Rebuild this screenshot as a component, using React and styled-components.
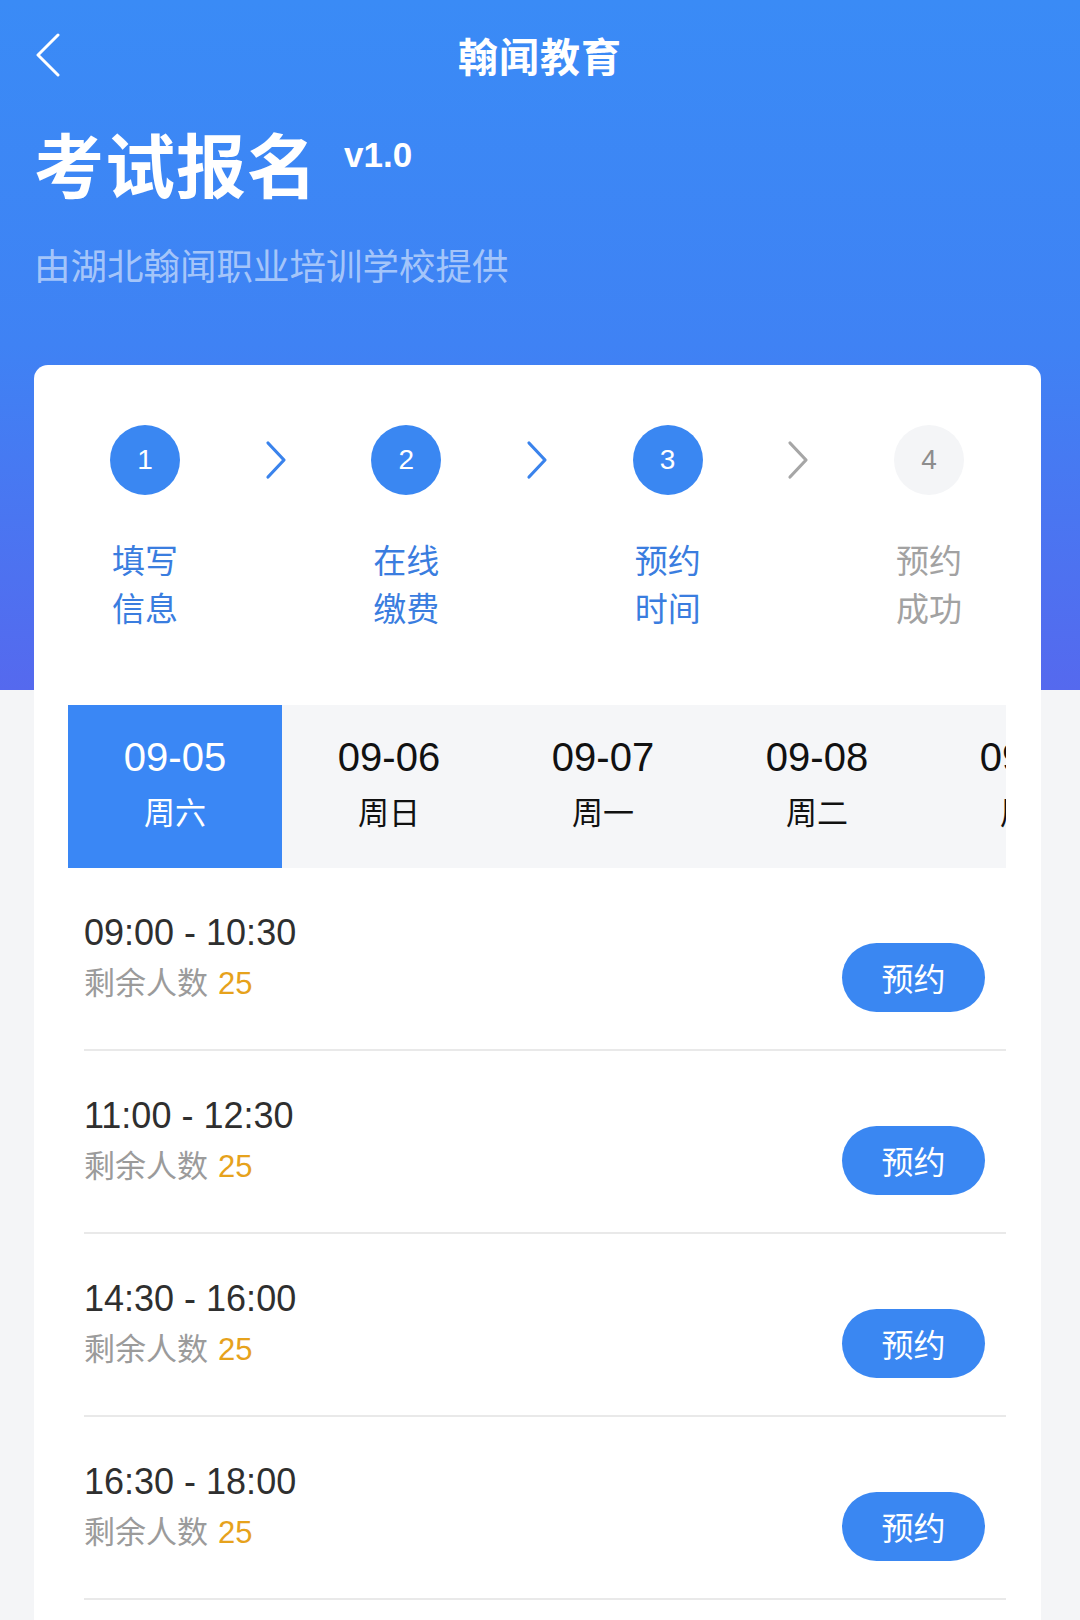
import { Fragment } from "react"
import styled, { createGlobalStyle } from "styled-components"

const GlobalStyle = createGlobalStyle`
  body {
    margin: 0;
    background: #f4f5f7;
    font-family: "Liberation Sans", "Noto Sans CJK SC", sans-serif;
  }
`

const Page = styled.div`
  width: 1080px;
  min-height: 1620px;
  background: #f4f5f7;
  overflow: hidden;
`

const Header = styled.div`
  height: 690px;
  background: linear-gradient(180deg, #3a8bf6 0%, #3f82f4 50%, #5569ee 100%);
  color: #fff;
`

const NavBar = styled.div`
  position: relative;
  height: 110px;
  display: flex;
  align-items: center;
  justify-content: center;
`

const BackButton = styled.div`
  position: absolute;
  left: 34px;
  top: 33px;
  width: 28px;
  height: 44px;
`

const NavTitle = styled.h1`
  margin: 0;
  font-size: 40px;
  font-weight: 700;
  letter-spacing: 1px;
`

const TitleRow = styled.div`
  margin: 24px 0 0 34px;
  display: flex;
  align-items: flex-start;
`

const Title = styled.h2`
  margin: 0;
  font-size: 70px;
  line-height: 70px;
  font-weight: 700;
  letter-spacing: 1px;
`

const Version = styled.span`
  margin: 3px 0 0 26px;
  font-size: 35px;
  line-height: 35px;
  font-weight: 700;
`

const Subtitle = styled.p`
  margin: 42px 0 0 34px;
  font-size: 36.5px;
  line-height: 43px;
  color: rgba(255, 255, 255, 0.55);
`

const Card = styled.div`
  margin: -325px 39px 0 34px;
  background: #fff;
  border-radius: 14px;
  padding: 60px 0 40px;
`

const Steps = styled.div`
  display: flex;
  justify-content: space-between;
  align-items: flex-start;
  padding: 0 62px 0 61px;
`

const Step = styled.div`
  width: 100px;
  display: flex;
  flex-direction: column;
  align-items: center;
`

const Circle = styled.div`
  width: 70px;
  height: 70px;
  border-radius: 50%;
  background: ${(p) => (p.$done ? "#3a87f2" : "#f4f5f7")};
  color: ${(p) => (p.$done ? "#fff" : "#8d8d8d")};
  font-size: 28px;
  display: flex;
  align-items: center;
  justify-content: center;
`

const StepLabel = styled.div`
  margin-top: 43px;
  font-size: 33px;
  line-height: 48px;
  text-align: center;
  color: ${(p) => (p.$done ? "#3a7ddf" : "#a2a2a2")};
`

const Chevron = styled.div`
  width: 24px;
  height: 40px;
  margin-top: 15px;
  color: ${(p) => (p.$done ? "#3a83ec" : "#a6a6a6")};
`

const DateStrip = styled.div`
  margin: 71px 35px 0 34px;
  display: flex;
  overflow: hidden;
  background: #f5f6f8;
`

const DateTab = styled.div`
  flex: 0 0 214px;
  height: 163px;
  padding-bottom: 6px;
  box-sizing: border-box;
  display: flex;
  flex-direction: column;
  align-items: center;
  justify-content: center;
  gap: 14px;
  background: ${(p) => (p.$active ? "#3a87f5" : "transparent")};
  color: ${(p) => (p.$active ? "#fff" : "#111")};
`

const DateText = styled.div`
  font-size: 40px;
  line-height: 46px;
`

const WeekText = styled.div`
  font-size: 31px;
  line-height: 40px;
`

const SlotList = styled.div`
  margin: 0 35px 0 50px;
`

const Slot = styled.div`
  height: 181px;
  display: flex;
  align-items: center;
  justify-content: space-between;
  border-bottom: 2px solid #e9e9e9;
`

const SlotInfo = styled.div`
  display: flex;
  flex-direction: column;
`

const SlotTime = styled.div`
  font-size: 36px;
  line-height: 50px;
  color: #2f2f2f;
`

const SlotRemain = styled.div`
  font-size: 31px;
  line-height: 52px;
  color: #9b9b9b;
`

const RemainCount = styled.span`
  margin-left: 10px;
  color: #e6a21c;
`

const BookButton = styled.button`
  margin: 37px 21px 0 0;
  width: 143px;
  height: 69px;
  border: none;
  border-radius: 35px;
  background: #3a87f2;
  color: #fff;
  font-family: inherit;
  font-size: 32px;
`

const steps = [
  { n: 1, label: ["填写", "信息"], done: true },
  { n: 2, label: ["在线", "缴费"], done: true },
  { n: 3, label: ["预约", "时间"], done: true },
  { n: 4, label: ["预约", "成功"], done: false },
]

const dates = [
  { d: "09-05", w: "周六" },
  { d: "09-06", w: "周日" },
  { d: "09-07", w: "周一" },
  { d: "09-08", w: "周二" },
  { d: "09-09", w: "周三" },
]

const slots = ["09:00 - 10:30", "11:00 - 12:30", "14:30 - 16:00", "16:30 - 18:00"]

const ChevronIcon = () => (
  <svg width="24" height="40" viewBox="0 0 24 40" fill="none">
    <polyline points="4,3 20,20 4,37" stroke="currentColor" strokeWidth="3.2" strokeLinecap="round" strokeLinejoin="round" />
  </svg>
)

const App = () => {
  return (
    <Page>
      <GlobalStyle />
      <Header>
        <NavBar>
          <BackButton>
            <svg width="28" height="44" viewBox="0 0 28 44" fill="none">
              <polyline points="24,2 4,22 24,42" stroke="#fff" strokeWidth="3" strokeLinecap="round" strokeLinejoin="round" />
            </svg>
          </BackButton>
          <NavTitle>翰闻教育</NavTitle>
        </NavBar>
        <TitleRow>
          <Title>考试报名</Title>
          <Version>v1.0</Version>
        </TitleRow>
        <Subtitle>由湖北翰闻职业培训学校提供</Subtitle>
      </Header>

      <Card>
        <Steps>
          {steps.map((s, i) => (
            <Fragment key={s.n}>
              <Step>
                <Circle $done={s.done}>{s.n}</Circle>
                <StepLabel $done={s.done}>
                  {s.label[0]}
                  <br />
                  {s.label[1]}
                </StepLabel>
              </Step>
              {i < steps.length - 1 && (
                <Chevron $done={steps[i + 1].done}>
                  <ChevronIcon />
                </Chevron>
              )}
            </Fragment>
          ))}
        </Steps>

        <DateStrip>
          {dates.map((d, i) => (
            <DateTab key={d.d} $active={i === 0}>
              <DateText>{d.d}</DateText>
              <WeekText>{d.w}</WeekText>
            </DateTab>
          ))}
        </DateStrip>

        <SlotList>
          {slots.map((t) => (
            <Slot key={t}>
              <SlotInfo>
                <SlotTime>{t}</SlotTime>
                <SlotRemain>
                  剩余人数<RemainCount>25</RemainCount>
                </SlotRemain>
              </SlotInfo>
              <BookButton>预约</BookButton>
            </Slot>
          ))}
        </SlotList>
      </Card>
    </Page>
  )
}

export default App
